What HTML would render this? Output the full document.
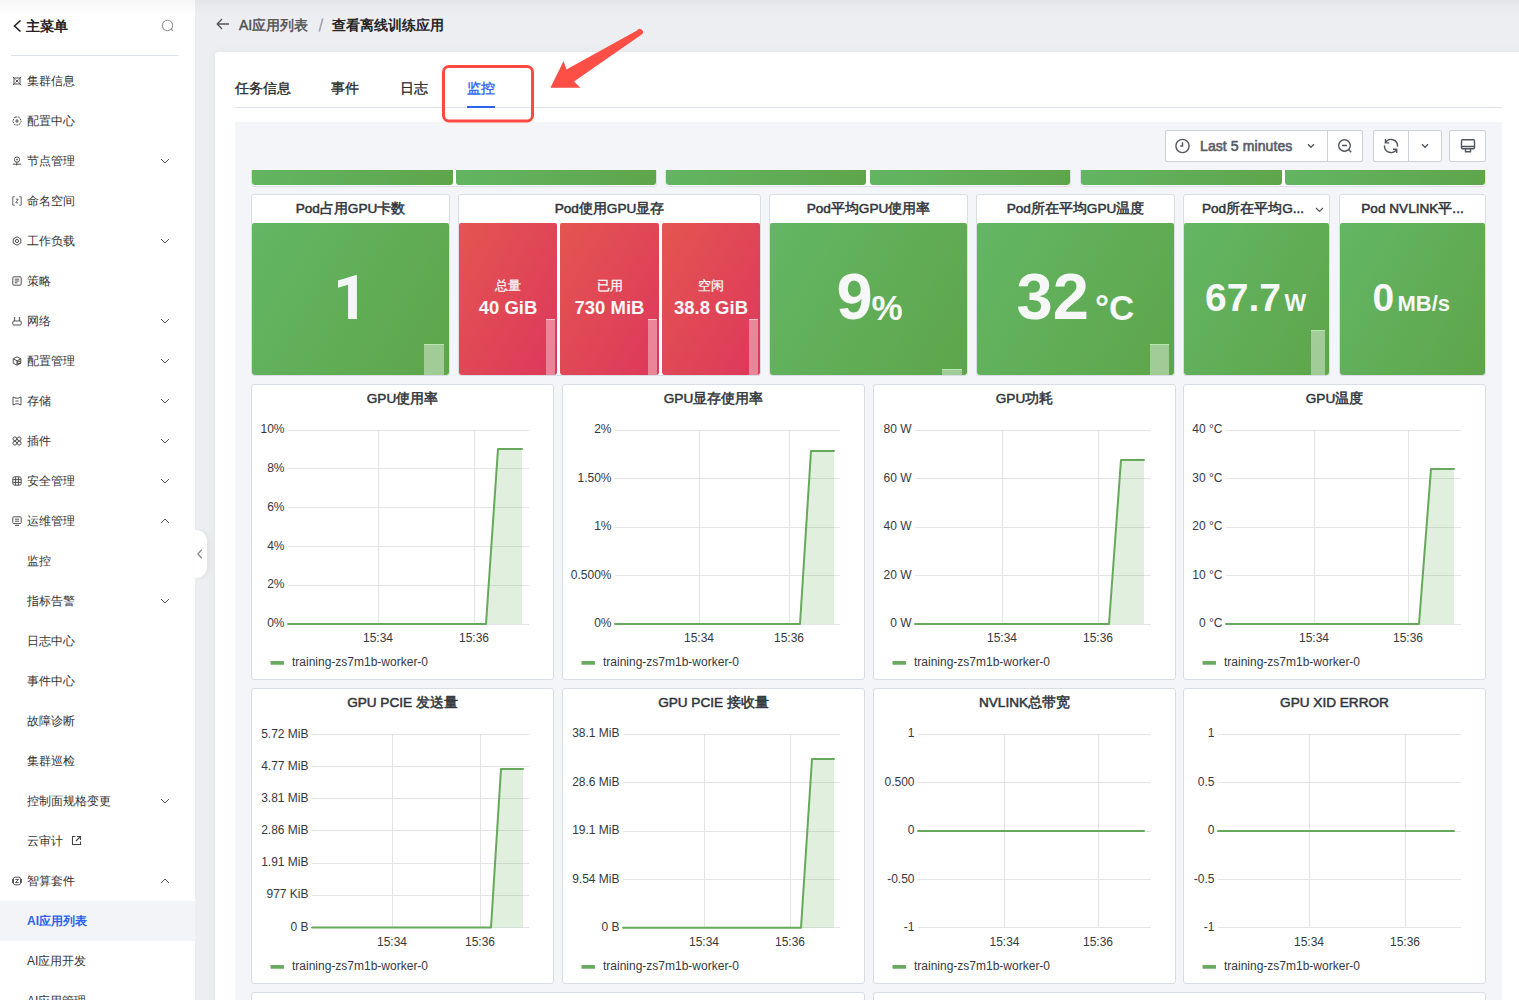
<!DOCTYPE html><html><head><meta charset="utf-8"><style>
*{box-sizing:border-box;margin:0;padding:0}
html,body{width:1519px;height:1000px;overflow:hidden}
body{position:relative;background:#edeef2;font-family:"Liberation Sans", sans-serif;color:#333}
.abs{position:absolute}
.t{position:absolute;white-space:nowrap;line-height:1}
</style></head><body>
<div class="abs" style="left:0;top:0;width:195px;height:1000px;background:#fff"></div><div class="abs" style="left:0;top:0;width:1519px;height:16px;background:linear-gradient(rgba(0,0,0,0.035),rgba(0,0,0,0));z-index:5"></div><svg class="abs" style="left:12px;top:18px" width="12" height="16" viewBox="0 0 12 16"><path d="M8.5 2.5 L2.5 8 L8.5 13.5" fill="none" stroke="#222" stroke-width="1.6"/></svg><div class="t" style="left:26px;top:19px;font-size:14px;font-weight:bold;color:#222;line-height:14px">主菜单</div><svg class="abs" style="left:161px;top:19px" width="14" height="14" viewBox="0 0 14 14"><circle cx="6.5" cy="6.5" r="5.2" fill="none" stroke="#999" stroke-width="1.1"/><path d="M10.2 10.2 L12 12" stroke="#999" stroke-width="1.1"/></svg><div class="abs" style="left:11px;top:55px;width:168px;height:1px;background:#dde2ea"></div><svg class="abs" style="left:12px;top:75.5px" width="10" height="10" viewBox="0 0 10 10"><rect x="2" y="2" width="6" height="6" stroke="#4a4a4a" stroke-width="0.95" fill="none"/><path d="M0.8 0.8 L2.4 2.4 M9.2 0.8 L7.6 2.4 M0.8 9.2 L2.4 7.6 M9.2 9.2 L7.6 7.6 M3.5 3.5 L6.5 6.5 M6.5 3.5 L3.5 6.5" stroke="#4a4a4a" stroke-width="0.95" fill="none"/></svg><div class="t" style="left:27px;top:75px;font-size:12px;line-height:12px;color:#333;font-weight:normal">集群信息</div><svg class="abs" style="left:12px;top:115.5px" width="10" height="10" viewBox="0 0 10 10"><path d="M3 1 L7 1 L9.4 5 L7 9 L3 9 L0.6 5 Z" stroke="#4a4a4a" stroke-width="0.95" fill="none" stroke-dasharray="2 0.8"/><path d="M5 3 L5 7 M3.2 5 L6.8 5" stroke="#4a4a4a" stroke-width="0.95" fill="none"/></svg><div class="t" style="left:27px;top:115px;font-size:12px;line-height:12px;color:#333;font-weight:normal">配置中心</div><svg class="abs" style="left:12px;top:155.5px" width="10" height="10" viewBox="0 0 10 10"><circle cx="5" cy="3.6" r="2.6" stroke="#4a4a4a" stroke-width="0.95" fill="none"/><circle cx="5" cy="3.6" r="0.8" fill="#3a3a3a"/><path d="M5 6.2 L4.6 9.5 M0.8 8.2 L9.2 8.2" stroke="#4a4a4a" stroke-width="0.95" fill="none"/></svg><div class="t" style="left:27px;top:155px;font-size:12px;line-height:12px;color:#333;font-weight:normal">节点管理</div><svg class="abs" style="left:160px;top:158px" width="10" height="6" viewBox="0 0 10 6"><path d="M1 1 L5 5 L9 1" fill="none" stroke="#555" stroke-width="1"/></svg><svg class="abs" style="left:12px;top:195.5px" width="10" height="10" viewBox="0 0 10 10"><path d="M2.8 0.8 L0.8 0.8 L0.8 9.2 L2.8 9.2 M7.2 0.8 L9.2 0.8 L9.2 9.2 L7.2 9.2 M3.8 3.2 L6.2 3.2 L3.8 6.8 L6.2 6.8" stroke="#666" stroke-width="1" fill="none"/></svg><div class="t" style="left:27px;top:195px;font-size:12px;line-height:12px;color:#333;font-weight:normal">命名空间</div><svg class="abs" style="left:12px;top:235.5px" width="10" height="10" viewBox="0 0 10 10"><path d="M5 0.8 L8.8 3 L8.8 7 L5 9.2 L1.2 7 L1.2 3 Z" stroke="#4a4a4a" stroke-width="0.95" fill="none"/><circle cx="5" cy="5" r="1.6" stroke="#4a4a4a" stroke-width="0.95" fill="none"/></svg><div class="t" style="left:27px;top:235px;font-size:12px;line-height:12px;color:#333;font-weight:normal">工作负载</div><svg class="abs" style="left:160px;top:238px" width="10" height="6" viewBox="0 0 10 6"><path d="M1 1 L5 5 L9 1" fill="none" stroke="#555" stroke-width="1"/></svg><svg class="abs" style="left:12px;top:275.5px" width="10" height="10" viewBox="0 0 10 10"><rect x="0.8" y="0.8" width="8.4" height="8.4" rx="1.2" stroke="#4a4a4a" stroke-width="0.95" fill="none"/><path d="M2.8 3.2 L7.2 3.2 M2.8 5 L7.2 5 M2.8 6.8 L5.5 6.8" stroke="#4a4a4a" stroke-width="0.95" fill="none"/></svg><div class="t" style="left:27px;top:275px;font-size:12px;line-height:12px;color:#333;font-weight:normal">策略</div><svg class="abs" style="left:12px;top:315.5px" width="10" height="10" viewBox="0 0 10 10"><rect x="0.8" y="5" width="8.4" height="4" rx="1" stroke="#4a4a4a" stroke-width="0.95" fill="none"/><path d="M2.6 5 L2.6 1 M7.4 5 L7.4 1" stroke="#4a4a4a" stroke-width="0.95" fill="none"/></svg><div class="t" style="left:27px;top:315px;font-size:12px;line-height:12px;color:#333;font-weight:normal">网络</div><svg class="abs" style="left:160px;top:318px" width="10" height="6" viewBox="0 0 10 6"><path d="M1 1 L5 5 L9 1" fill="none" stroke="#555" stroke-width="1"/></svg><svg class="abs" style="left:12px;top:355.5px" width="10" height="10" viewBox="0 0 10 10"><path d="M5 0.8 L8.8 2.8 L8.8 7.2 L5 9.2 L1.2 7.2 L1.2 2.8 Z M1.2 2.8 L5 4.8 L8.8 2.8 M5 4.8 L5 9.2" stroke="#4a4a4a" stroke-width="0.95" fill="none"/><rect x="5.8" y="5.2" width="2.4" height="2.4" stroke="#4a4a4a" stroke-width="0.95" fill="none"/></svg><div class="t" style="left:27px;top:355px;font-size:12px;line-height:12px;color:#333;font-weight:normal">配置管理</div><svg class="abs" style="left:160px;top:358px" width="10" height="6" viewBox="0 0 10 6"><path d="M1 1 L5 5 L9 1" fill="none" stroke="#555" stroke-width="1"/></svg><svg class="abs" style="left:12px;top:395.5px" width="10" height="10" viewBox="0 0 10 10"><path d="M1 1 L4 2.2 L6 2.2 L9 1 L9 9 L6 7.8 L4 7.8 L1 9 Z" stroke="#4a4a4a" stroke-width="0.95" fill="none"/><path d="M3.5 5 L6.5 5" stroke="#4a4a4a" stroke-width="0.95" fill="none"/></svg><div class="t" style="left:27px;top:395px;font-size:12px;line-height:12px;color:#333;font-weight:normal">存储</div><svg class="abs" style="left:160px;top:398px" width="10" height="6" viewBox="0 0 10 6"><path d="M1 1 L5 5 L9 1" fill="none" stroke="#555" stroke-width="1"/></svg><svg class="abs" style="left:12px;top:435.5px" width="10" height="10" viewBox="0 0 10 10"><circle cx="2.8" cy="2.8" r="1.9" stroke="#4a4a4a" stroke-width="0.95" fill="none"/><circle cx="7.2" cy="2.8" r="1.9" stroke="#4a4a4a" stroke-width="0.95" fill="none"/><circle cx="2.8" cy="7.2" r="1.9" stroke="#4a4a4a" stroke-width="0.95" fill="none"/><circle cx="7.2" cy="7.2" r="1.9" stroke="#4a4a4a" stroke-width="0.95" fill="none"/></svg><div class="t" style="left:27px;top:435px;font-size:12px;line-height:12px;color:#333;font-weight:normal">插件</div><svg class="abs" style="left:160px;top:438px" width="10" height="6" viewBox="0 0 10 6"><path d="M1 1 L5 5 L9 1" fill="none" stroke="#555" stroke-width="1"/></svg><svg class="abs" style="left:12px;top:475.5px" width="10" height="10" viewBox="0 0 10 10"><rect x="0.8" y="0.8" width="8.4" height="8.4" rx="2" stroke="#4a4a4a" stroke-width="0.95" fill="none"/><path d="M0.8 3.6 L9.2 3.6 M0.8 6.4 L9.2 6.4 M3.6 0.8 L3.6 9.2 M6.4 0.8 L6.4 9.2" stroke="#4a4a4a" stroke-width="0.95" fill="none"/></svg><div class="t" style="left:27px;top:475px;font-size:12px;line-height:12px;color:#333;font-weight:normal">安全管理</div><svg class="abs" style="left:160px;top:478px" width="10" height="6" viewBox="0 0 10 6"><path d="M1 1 L5 5 L9 1" fill="none" stroke="#555" stroke-width="1"/></svg><svg class="abs" style="left:12px;top:515.5px" width="10" height="10" viewBox="0 0 10 10"><rect x="0.8" y="0.8" width="8.4" height="6.8" rx="1" stroke="#4a4a4a" stroke-width="0.95" fill="none"/><path d="M3 3.2 L7 3.2 M3 5.2 L7 5.2 M3 9.4 L7 9.4" stroke="#4a4a4a" stroke-width="0.95" fill="none"/></svg><div class="t" style="left:27px;top:515px;font-size:12px;line-height:12px;color:#333;font-weight:normal">运维管理</div><svg class="abs" style="left:160px;top:518px" width="10" height="6" viewBox="0 0 10 6"><path d="M1 5 L5 1 L9 5" fill="none" stroke="#555" stroke-width="1"/></svg><div class="t" style="left:27px;top:555px;font-size:12px;line-height:12px;color:#333;font-weight:normal">监控</div><div class="t" style="left:27px;top:595px;font-size:12px;line-height:12px;color:#333;font-weight:normal">指标告警</div><svg class="abs" style="left:160px;top:598px" width="10" height="6" viewBox="0 0 10 6"><path d="M1 1 L5 5 L9 1" fill="none" stroke="#555" stroke-width="1"/></svg><div class="t" style="left:27px;top:635px;font-size:12px;line-height:12px;color:#333;font-weight:normal">日志中心</div><div class="t" style="left:27px;top:675px;font-size:12px;line-height:12px;color:#333;font-weight:normal">事件中心</div><div class="t" style="left:27px;top:715px;font-size:12px;line-height:12px;color:#333;font-weight:normal">故障诊断</div><div class="t" style="left:27px;top:755px;font-size:12px;line-height:12px;color:#333;font-weight:normal">集群巡检</div><div class="t" style="left:27px;top:795px;font-size:12px;line-height:12px;color:#333;font-weight:normal">控制面规格变更</div><svg class="abs" style="left:160px;top:798px" width="10" height="6" viewBox="0 0 10 6"><path d="M1 1 L5 5 L9 1" fill="none" stroke="#555" stroke-width="1"/></svg><div class="t" style="left:27px;top:835px;font-size:12px;line-height:12px;color:#333;font-weight:normal">云审计</div><svg class="abs" style="left:71px;top:835px" width="11" height="11" viewBox="0 0 11 11"><path d="M4.5 1.5 L1.5 1.5 L1.5 9.5 L9.5 9.5 L9.5 6.5 M6 1.5 L9.5 1.5 L9.5 5 M9.5 1.5 L5 6" fill="none" stroke="#444" stroke-width="1.1"/></svg><svg class="abs" style="left:12px;top:875.5px" width="10" height="10" viewBox="0 0 10 10"><rect x="1.5" y="1.2" width="7" height="7.6" rx="1.6" stroke="#4a4a4a" stroke-width="0.95" fill="none"/><path d="M0.6 3 L0.6 7 M9.4 3 L9.4 7 M3.4 3.4 L6.6 3.4 L3.4 6.6 L6.6 6.6" stroke="#4a4a4a" stroke-width="0.95" fill="none"/></svg><div class="t" style="left:27px;top:875px;font-size:12px;line-height:12px;color:#333;font-weight:normal">智算套件</div><svg class="abs" style="left:160px;top:878px" width="10" height="6" viewBox="0 0 10 6"><path d="M1 5 L5 1 L9 5" fill="none" stroke="#555" stroke-width="1"/></svg><div class="abs" style="left:0;top:901px;width:195px;height:40px;background:#f3f4f8"></div><div class="t" style="left:27px;top:915px;font-size:12px;line-height:12px;color:#2b63f0;font-weight:bold">AI应用列表</div><div class="t" style="left:27px;top:955px;font-size:12px;line-height:12px;color:#333;font-weight:normal">AI应用开发</div><div class="t" style="left:27px;top:995px;font-size:12px;line-height:12px;color:#333;font-weight:normal">AI应用管理</div><div class="abs" style="left:195px;top:530px;width:12px;height:48px;background:#fff;border-radius:0 11px 11px 0;box-shadow:2px 0 5px rgba(0,0,0,0.06)"></div><svg class="abs" style="left:197px;top:549px" width="6" height="10" viewBox="0 0 6 10"><path d="M4.8 0.8 L0.9 5 L4.8 9.2" fill="none" stroke="#8a8a8a" stroke-width="1.25"/></svg><svg class="abs" style="left:216px;top:18px" width="14" height="12" viewBox="0 0 14 12"><path d="M6 1 L1.2 6 L6 11 M1.2 6 L13 6" fill="none" stroke="#555" stroke-width="1.3"/></svg><div class="t" style="left:239px;top:18px;font-size:14px;line-height:14px;-webkit-text-stroke:0.45px #505050;color:#505050">AI应用列表</div><svg class="abs" style="left:0;top:0" width="400" height="40"><path d="M322.6 19 L319.4 31" stroke="#a3a8b2" stroke-width="1.7" stroke-linecap="round"/></svg><div class="t" style="left:332px;top:18px;font-size:14px;line-height:14px;font-weight:bold;color:#262626">查看离线训练应用</div><div class="abs" style="left:215px;top:52px;width:1310px;height:960px;background:#fff;border-radius:4px;box-shadow:0 0 8px rgba(0,0,0,0.05)"></div><div class="t" style="left:235px;top:81px;font-size:14px;line-height:14px;-webkit-text-stroke:0.35px #2a2a2a;color:#2a2a2a">任务信息</div><div class="t" style="left:331px;top:81px;font-size:14px;line-height:14px;-webkit-text-stroke:0.35px #2a2a2a;color:#2a2a2a">事件</div><div class="t" style="left:400px;top:81px;font-size:14px;line-height:14px;-webkit-text-stroke:0.35px #2a2a2a;color:#2a2a2a">日志</div><div class="t" style="left:467px;top:81px;font-size:14px;line-height:14px;-webkit-text-stroke:0.35px #2b63f0;color:#2b63f0">监控</div><div class="abs" style="left:235px;top:107px;width:1267px;height:1px;background:#dfe3ea"></div><div class="abs" style="left:467px;top:106px;width:28px;height:2px;background:#2b63f0"></div><div class="abs" style="left:235px;top:122px;width:1267px;height:880px;background:#f4f5f8;overflow:hidden" id="dash"><div class="abs" style="left:930px;top:8px;width:198px;height:32px;background:#fff;border:1px solid #ccd1da;border-radius:2px"></div><div class="abs" style="left:1092px;top:9px;width:1px;height:30px;background:#ccd1da"></div><div class="abs" style="left:1138px;top:8px;width:69px;height:32px;background:#fff;border:1px solid #ccd1da;border-radius:2px"></div><div class="abs" style="left:1173px;top:9px;width:1px;height:30px;background:#ccd1da"></div><div class="abs" style="left:1214px;top:8px;width:37px;height:32px;background:#fff;border:1px solid #ccd1da;border-radius:2px"></div><svg class="abs" style="left:940px;top:16px;overflow:visible" width="16" height="16" viewBox="0 0 16 16"><circle cx="7.5" cy="8" r="6.6" fill="none" stroke="#50565f" stroke-width="1.4"/><path d="M7.5 4.3 L7.5 8 L5.4 8" fill="none" stroke="#50565f" stroke-width="1.4"/></svg><div class="t" style="left:965px;top:17px;font-size:14px;line-height:14px;-webkit-text-stroke:0.6px #595e67;color:#595e67;letter-spacing:0.1px">Last 5 minutes</div><svg class="abs" style="left:1072px;top:21px;overflow:visible" width="8" height="6" viewBox="0 0 8 6"><path d="M1 1.2 L4 4.2 L7 1.2" fill="none" stroke="#50565f" stroke-width="1.4"/></svg><svg class="abs" style="left:1101.7px;top:15.800000000000011px;overflow:visible" width="16" height="16" viewBox="0 0 16 16"><circle cx="7.5" cy="7.5" r="5.8" fill="none" stroke="#50565f" stroke-width="1.4"/><path d="M5 7.5 L10 7.5 M11.6 11.6 L14.2 14.2" fill="none" stroke="#50565f" stroke-width="1.4"/></svg><svg class="abs" style="left:1147px;top:16px;overflow:visible" width="18" height="17" viewBox="0 0 18 17"><path d="M3.37 4.75 A6.5 6.5 0 0 1 15.48 8.57 M2.52 7.43 A6.5 6.5 0 0 0 14.63 11.25" fill="none" stroke="#50565f" stroke-width="1.4"/><path d="M3.5 0.9 L3.37 4.75 L7.2 4.9 M10.9 11.2 L14.63 11.25 L14.7 15.1" fill="none" stroke="#50565f" stroke-width="1.4"/></svg><svg class="abs" style="left:1186px;top:21px;overflow:visible" width="8" height="6" viewBox="0 0 8 6"><path d="M1 1.2 L4 4.2 L7 1.2" fill="none" stroke="#50565f" stroke-width="1.4"/></svg><svg class="abs" style="left:1225px;top:16px;overflow:visible" width="16" height="16" viewBox="0 0 16 16"><rect x="1.5" y="1.8" width="13" height="9" rx="1.2" fill="none" stroke="#50565f" stroke-width="1.4"/><path d="M1.5 8.5 L14.5 8.5 M5.5 11 L5.5 13.8 L10.5 13.8 L10.5 11" fill="none" stroke="#50565f" stroke-width="1.4"/></svg><div class="abs" style="left:0;top:48px;width:1267px;height:830px;overflow:hidden"><div class="abs" style="left:16px;top:-20px;width:406px;height:37px;background:#fff;border:1px solid #dde1e7;border-radius:3px"></div><div class="abs" style="left:430px;top:-20px;width:406px;height:37px;background:#fff;border:1px solid #dde1e7;border-radius:3px"></div><div class="abs" style="left:845px;top:-20px;width:406px;height:37px;background:#fff;border:1px solid #dde1e7;border-radius:3px"></div><div class="abs" style="left:17px;top:-20px;width:201px;height:35px;background:linear-gradient(120deg,#63b664,#5ea54a);border-radius:0 0 3px 3px"></div><div class="abs" style="left:221px;top:-20px;width:200px;height:35px;background:linear-gradient(120deg,#63b664,#5ea54a);border-radius:0 0 3px 3px"></div><div class="abs" style="left:431px;top:-20px;width:200px;height:35px;background:linear-gradient(120deg,#63b664,#5ea54a);border-radius:0 0 3px 3px"></div><div class="abs" style="left:635px;top:-20px;width:200px;height:35px;background:linear-gradient(120deg,#63b664,#5ea54a);border-radius:0 0 3px 3px"></div><div class="abs" style="left:846px;top:-20px;width:201px;height:35px;background:linear-gradient(120deg,#63b664,#5ea54a);border-radius:0 0 3px 3px"></div><div class="abs" style="left:1050px;top:-20px;width:200px;height:35px;background:linear-gradient(120deg,#63b664,#5ea54a);border-radius:0 0 3px 3px"></div></div><div class="abs" style="left:16px;top:72px;width:199px;height:182px;background:#fff;border:1px solid #d9dde4;border-radius:3px"></div><div class="t" style="left:-34.5px;width:300px;text-align:center;top:80.20px;font-size:13.6px;line-height:13.6px;-webkit-text-stroke:0.5px #30353b;color:#30353b">Pod占用GPU卡数</div><div class="abs" style="left:223px;top:72px;width:303px;height:182px;background:#fff;border:1px solid #d9dde4;border-radius:3px"></div><div class="t" style="left:224.5px;width:300px;text-align:center;top:80.20px;font-size:13.6px;line-height:13.6px;-webkit-text-stroke:0.5px #30353b;color:#30353b">Pod使用GPU显存</div><div class="abs" style="left:534px;top:72px;width:199px;height:182px;background:#fff;border:1px solid #d9dde4;border-radius:3px"></div><div class="t" style="left:483.5px;width:300px;text-align:center;top:80.20px;font-size:13.6px;line-height:13.6px;-webkit-text-stroke:0.5px #30353b;color:#30353b">Pod平均GPU使用率</div><div class="abs" style="left:741px;top:72px;width:199px;height:182px;background:#fff;border:1px solid #d9dde4;border-radius:3px"></div><div class="t" style="left:690.5px;width:300px;text-align:center;top:80.20px;font-size:13.6px;line-height:13.6px;-webkit-text-stroke:0.5px #30353b;color:#30353b">Pod所在平均GPU温度</div><div class="abs" style="left:948px;top:72px;width:147px;height:182px;background:#fff;border:1px solid #d9dde4;border-radius:3px"></div><div class="t" style="left:868px;width:300px;text-align:center;top:80.20px;font-size:13.6px;line-height:13.6px;-webkit-text-stroke:0.5px #30353b;color:#30353b">Pod所在平均G...</div><div class="abs" style="left:1104px;top:72px;width:147px;height:182px;background:#fff;border:1px solid #d9dde4;border-radius:3px"></div><div class="t" style="left:1027.5px;width:300px;text-align:center;top:80.20px;font-size:13.6px;line-height:13.6px;-webkit-text-stroke:0.5px #30353b;color:#30353b">Pod NVLINK平...</div><svg class="abs" style="left:1080px;top:85px;overflow:visible" width="9" height="6" viewBox="0 0 9 6"><path d="M1 1 L4.5 4.5 L8 1" fill="none" stroke="#555" stroke-width="1.2"/></svg><div class="abs" style="left:17px;top:101px;width:197px;height:152px;background:linear-gradient(120deg,#63b664,#5ea54a);border-radius:2px 2px 3px 3px"></div><div class="abs" style="left:189px;top:222px;width:20px;height:31px;background:rgba(255,255,255,0.42);border-top:1.5px solid rgba(200,255,190,0.55)"></div><div class="abs" style="left:224px;top:101px;width:98px;height:152px;background:linear-gradient(120deg,#e45550,#dd385c);border-radius:2px 2px 3px 3px"></div><div class="abs" style="left:311px;top:197px;width:9px;height:56px;background:rgba(255,255,255,0.38);border-top:1.5px solid rgba(255,255,255,0.5)"></div><div class="abs" style="left:325px;top:101px;width:99px;height:152px;background:linear-gradient(120deg,#e45550,#dd385c);border-radius:2px 2px 3px 3px"></div><div class="abs" style="left:413px;top:197px;width:9px;height:56px;background:rgba(255,255,255,0.38);border-top:1.5px solid rgba(255,255,255,0.5)"></div><div class="abs" style="left:427px;top:101px;width:98px;height:152px;background:linear-gradient(120deg,#e45550,#dd385c);border-radius:2px 2px 3px 3px"></div><div class="abs" style="left:514px;top:197px;width:9px;height:56px;background:rgba(255,255,255,0.38);border-top:1.5px solid rgba(255,255,255,0.5)"></div><div class="abs" style="left:535px;top:101px;width:197px;height:152px;background:linear-gradient(120deg,#63b664,#5ea54a);border-radius:2px 2px 3px 3px"></div><div class="abs" style="left:707px;top:247px;width:20px;height:6px;background:rgba(255,255,255,0.42);border-top:1.5px solid rgba(200,255,190,0.55)"></div><div class="abs" style="left:742px;top:101px;width:197px;height:152px;background:linear-gradient(120deg,#63b664,#5ea54a);border-radius:2px 2px 3px 3px"></div><div class="abs" style="left:915px;top:222px;width:19px;height:31px;background:rgba(255,255,255,0.42);border-top:1.5px solid rgba(200,255,190,0.55)"></div><div class="abs" style="left:949px;top:101px;width:145px;height:152px;background:linear-gradient(120deg,#63b664,#5ea54a);border-radius:2px 2px 3px 3px"></div><div class="abs" style="left:1076px;top:208px;width:14px;height:45px;background:rgba(255,255,255,0.42);border-top:1.5px solid rgba(200,255,190,0.55)"></div><div class="abs" style="left:1105px;top:101px;width:145px;height:152px;background:linear-gradient(120deg,#63b664,#5ea54a);border-radius:2px 2px 3px 3px"></div><svg class="abs" style="left:95px;top:148px;overflow:visible" width="40" height="55" viewBox="0 0 40 55"><polygon points="8,10.6 26.9,4.75 26.9,49 18.1,49 18.1,14.8 8,17.8" fill="#f4f5f7"/></svg><div class="t" style="left:601.50px;top:142.48px;font-size:65px;line-height:65px;font-weight:bold;color:#f6f7f7;">9</div><div class="t" style="left:636.50px;top:167.87px;font-size:35px;line-height:35px;font-weight:bold;color:#f6f7f7;">%</div><div class="t" style="left:781.50px;top:142.48px;font-size:65px;line-height:65px;font-weight:bold;color:#f6f7f7;">32</div><div class="t" style="left:860.00px;top:167.87px;font-size:35px;line-height:35px;font-weight:bold;color:#f6f7f7;">°C</div><div class="t" style="left:970.00px;top:156.49px;font-size:39px;line-height:39px;font-weight:bold;color:#f6f7f7;">67.7</div><div class="t" style="left:1049.50px;top:170.03px;font-size:23px;line-height:23px;font-weight:bold;color:#f6f7f7;">W</div><div class="t" style="left:1137.50px;top:156.49px;font-size:39px;line-height:39px;font-weight:bold;color:#f6f7f7;">0</div><div class="t" style="left:1162.50px;top:170.88px;font-size:22px;line-height:22px;font-weight:bold;color:#f6f7f7;">MB/s</div><div class="t" style="left:224px;width:98px;text-align:center;top:157px;font-size:13px;line-height:14px;-webkit-text-stroke:0.3px #f6f7f7;color:#f6f7f7">总量</div><div class="t" style="left:224px;width:98px;text-align:center;top:175.5px;font-size:18.5px;line-height:19px;font-weight:bold;color:#f6f7f7">40 GiB</div><div class="t" style="left:325px;width:99px;text-align:center;top:157px;font-size:13px;line-height:14px;-webkit-text-stroke:0.3px #f6f7f7;color:#f6f7f7">已用</div><div class="t" style="left:325px;width:99px;text-align:center;top:175.5px;font-size:18.5px;line-height:19px;font-weight:bold;color:#f6f7f7">730 MiB</div><div class="t" style="left:427px;width:98px;text-align:center;top:157px;font-size:13px;line-height:14px;-webkit-text-stroke:0.3px #f6f7f7;color:#f6f7f7">空闲</div><div class="t" style="left:427px;width:98px;text-align:center;top:175.5px;font-size:18.5px;line-height:19px;font-weight:bold;color:#f6f7f7">38.8 GiB</div><div class="abs" style="left:16px;top:262px;width:303px;height:296px;background:#fff;border:1px solid #d9dde4;border-radius:3px"></div><div class="t" style="left:17.5px;width:300px;text-align:center;top:270.30px;font-size:13.6px;line-height:13.6px;-webkit-text-stroke:0.5px #30353b;color:#30353b">GPU使用率</div><div class="abs" style="left:327px;top:262px;width:303px;height:296px;background:#fff;border:1px solid #d9dde4;border-radius:3px"></div><div class="t" style="left:328.5px;width:300px;text-align:center;top:270.30px;font-size:13.6px;line-height:13.6px;-webkit-text-stroke:0.5px #30353b;color:#30353b">GPU显存使用率</div><div class="abs" style="left:638px;top:262px;width:303px;height:296px;background:#fff;border:1px solid #d9dde4;border-radius:3px"></div><div class="t" style="left:639.5px;width:300px;text-align:center;top:270.30px;font-size:13.6px;line-height:13.6px;-webkit-text-stroke:0.5px #30353b;color:#30353b">GPU功耗</div><div class="abs" style="left:948px;top:262px;width:303px;height:296px;background:#fff;border:1px solid #d9dde4;border-radius:3px"></div><div class="t" style="left:949.5px;width:300px;text-align:center;top:270.30px;font-size:13.6px;line-height:13.6px;-webkit-text-stroke:0.5px #30353b;color:#30353b">GPU温度</div><div class="abs" style="left:16px;top:566px;width:303px;height:296px;background:#fff;border:1px solid #d9dde4;border-radius:3px"></div><div class="t" style="left:17.5px;width:300px;text-align:center;top:574.30px;font-size:13.6px;line-height:13.6px;-webkit-text-stroke:0.5px #30353b;color:#30353b">GPU PCIE 发送量</div><div class="abs" style="left:327px;top:566px;width:303px;height:296px;background:#fff;border:1px solid #d9dde4;border-radius:3px"></div><div class="t" style="left:328.5px;width:300px;text-align:center;top:574.30px;font-size:13.6px;line-height:13.6px;-webkit-text-stroke:0.5px #30353b;color:#30353b">GPU PCIE 接收量</div><div class="abs" style="left:638px;top:566px;width:303px;height:296px;background:#fff;border:1px solid #d9dde4;border-radius:3px"></div><div class="t" style="left:639.5px;width:300px;text-align:center;top:574.30px;font-size:13.6px;line-height:13.6px;-webkit-text-stroke:0.5px #30353b;color:#30353b">NVLINK总带宽</div><div class="abs" style="left:948px;top:566px;width:303px;height:296px;background:#fff;border:1px solid #d9dde4;border-radius:3px"></div><div class="t" style="left:949.5px;width:300px;text-align:center;top:574.30px;font-size:13.6px;line-height:13.6px;-webkit-text-stroke:0.5px #30353b;color:#30353b">GPU XID ERROR</div><svg class="abs" style="left:-235px;top:-122px" width="1519" height="1000" viewBox="0 0 1519 1000" font-family='"Liberation Sans", sans-serif'><line x1="288" x2="529" y1="430.5" y2="430.5" stroke="#e3e4e6" stroke-width="1"/><text x="284.5" y="433.2" text-anchor="end" font-size="12" fill="#35393f">10%</text><line x1="288" x2="529" y1="468.5" y2="468.5" stroke="#e3e4e6" stroke-width="1"/><text x="284.5" y="472.0" text-anchor="end" font-size="12" fill="#35393f">8%</text><line x1="288" x2="529" y1="507.5" y2="507.5" stroke="#e3e4e6" stroke-width="1"/><text x="284.5" y="510.8" text-anchor="end" font-size="12" fill="#35393f">6%</text><line x1="288" x2="529" y1="546.5" y2="546.5" stroke="#e3e4e6" stroke-width="1"/><text x="284.5" y="549.6" text-anchor="end" font-size="12" fill="#35393f">4%</text><line x1="288" x2="529" y1="585.5" y2="585.5" stroke="#e3e4e6" stroke-width="1"/><text x="284.5" y="588.4000000000001" text-anchor="end" font-size="12" fill="#35393f">2%</text><line x1="288" x2="529" y1="624.5" y2="624.5" stroke="#e3e4e6" stroke-width="1"/><text x="284.5" y="627.2" text-anchor="end" font-size="12" fill="#35393f">0%</text><line x1="378.5" x2="378.5" y1="430" y2="624" stroke="#e3e4e6" stroke-width="1"/><text x="378" y="642.3" text-anchor="middle" font-size="12" fill="#35393f">15:34</text><line x1="474.5" x2="474.5" y1="430" y2="624" stroke="#e3e4e6" stroke-width="1"/><text x="474" y="642.3" text-anchor="middle" font-size="12" fill="#35393f">15:36</text><polygon points="486,624 498,449 522,449 522,624" fill="rgba(86,166,75,0.18)"/><polyline points="288,624 486,624 498,449 522,449" fill="none" stroke="#66a95b" stroke-width="2" stroke-linejoin="round" stroke-linecap="round"/><rect x="270.5" y="661.0" width="13.5" height="3.8" rx="0.6" fill="#6aaa5f"/><text x="292" y="665.9" font-size="12" fill="#35393f">training-zs7m1b-worker-0</text><line x1="615" x2="840" y1="430.5" y2="430.5" stroke="#e3e4e6" stroke-width="1"/><text x="611.5" y="433.2" text-anchor="end" font-size="12" fill="#35393f">2%</text><line x1="615" x2="840" y1="478.5" y2="478.5" stroke="#e3e4e6" stroke-width="1"/><text x="611.5" y="481.7" text-anchor="end" font-size="12" fill="#35393f">1.50%</text><line x1="615" x2="840" y1="527.5" y2="527.5" stroke="#e3e4e6" stroke-width="1"/><text x="611.5" y="530.2" text-anchor="end" font-size="12" fill="#35393f">1%</text><line x1="615" x2="840" y1="575.5" y2="575.5" stroke="#e3e4e6" stroke-width="1"/><text x="611.5" y="578.7" text-anchor="end" font-size="12" fill="#35393f">0.500%</text><line x1="615" x2="840" y1="624.5" y2="624.5" stroke="#e3e4e6" stroke-width="1"/><text x="611.5" y="627.2" text-anchor="end" font-size="12" fill="#35393f">0%</text><line x1="699.5" x2="699.5" y1="430" y2="624" stroke="#e3e4e6" stroke-width="1"/><text x="699" y="642.3" text-anchor="middle" font-size="12" fill="#35393f">15:34</text><line x1="789.5" x2="789.5" y1="430" y2="624" stroke="#e3e4e6" stroke-width="1"/><text x="789" y="642.3" text-anchor="middle" font-size="12" fill="#35393f">15:36</text><polygon points="800,624 811,451 834,451 834,624" fill="rgba(86,166,75,0.18)"/><polyline points="615,624 800,624 811,451 834,451" fill="none" stroke="#66a95b" stroke-width="2" stroke-linejoin="round" stroke-linecap="round"/><rect x="581.5" y="661.0" width="13.5" height="3.8" rx="0.6" fill="#6aaa5f"/><text x="603" y="665.9" font-size="12" fill="#35393f">training-zs7m1b-worker-0</text><line x1="915" x2="1151" y1="430.5" y2="430.5" stroke="#e3e4e6" stroke-width="1"/><text x="911.5" y="433.2" text-anchor="end" font-size="12" fill="#35393f">80 W</text><line x1="915" x2="1151" y1="478.5" y2="478.5" stroke="#e3e4e6" stroke-width="1"/><text x="911.5" y="481.7" text-anchor="end" font-size="12" fill="#35393f">60 W</text><line x1="915" x2="1151" y1="527.5" y2="527.5" stroke="#e3e4e6" stroke-width="1"/><text x="911.5" y="530.2" text-anchor="end" font-size="12" fill="#35393f">40 W</text><line x1="915" x2="1151" y1="575.5" y2="575.5" stroke="#e3e4e6" stroke-width="1"/><text x="911.5" y="578.7" text-anchor="end" font-size="12" fill="#35393f">20 W</text><line x1="915" x2="1151" y1="624.5" y2="624.5" stroke="#e3e4e6" stroke-width="1"/><text x="911.5" y="627.2" text-anchor="end" font-size="12" fill="#35393f">0 W</text><line x1="1002.5" x2="1002.5" y1="430" y2="624" stroke="#e3e4e6" stroke-width="1"/><text x="1002" y="642.3" text-anchor="middle" font-size="12" fill="#35393f">15:34</text><line x1="1098.5" x2="1098.5" y1="430" y2="624" stroke="#e3e4e6" stroke-width="1"/><text x="1098" y="642.3" text-anchor="middle" font-size="12" fill="#35393f">15:36</text><polygon points="1109,624 1121,460 1144,460 1144,624" fill="rgba(86,166,75,0.18)"/><polyline points="915,624 1109,624 1121,460 1144,460" fill="none" stroke="#66a95b" stroke-width="2" stroke-linejoin="round" stroke-linecap="round"/><rect x="892.5" y="661.0" width="13.5" height="3.8" rx="0.6" fill="#6aaa5f"/><text x="914" y="665.9" font-size="12" fill="#35393f">training-zs7m1b-worker-0</text><line x1="1226" x2="1461" y1="430.5" y2="430.5" stroke="#e3e4e6" stroke-width="1"/><text x="1222.5" y="433.2" text-anchor="end" font-size="12" fill="#35393f">40 °C</text><line x1="1226" x2="1461" y1="478.5" y2="478.5" stroke="#e3e4e6" stroke-width="1"/><text x="1222.5" y="481.7" text-anchor="end" font-size="12" fill="#35393f">30 °C</text><line x1="1226" x2="1461" y1="527.5" y2="527.5" stroke="#e3e4e6" stroke-width="1"/><text x="1222.5" y="530.2" text-anchor="end" font-size="12" fill="#35393f">20 °C</text><line x1="1226" x2="1461" y1="575.5" y2="575.5" stroke="#e3e4e6" stroke-width="1"/><text x="1222.5" y="578.7" text-anchor="end" font-size="12" fill="#35393f">10 °C</text><line x1="1226" x2="1461" y1="624.5" y2="624.5" stroke="#e3e4e6" stroke-width="1"/><text x="1222.5" y="627.2" text-anchor="end" font-size="12" fill="#35393f">0 °C</text><line x1="1314.5" x2="1314.5" y1="430" y2="624" stroke="#e3e4e6" stroke-width="1"/><text x="1314" y="642.3" text-anchor="middle" font-size="12" fill="#35393f">15:34</text><line x1="1408.5" x2="1408.5" y1="430" y2="624" stroke="#e3e4e6" stroke-width="1"/><text x="1408" y="642.3" text-anchor="middle" font-size="12" fill="#35393f">15:36</text><polygon points="1419,624 1431,469 1454,469 1454,624" fill="rgba(86,166,75,0.18)"/><polyline points="1226,624 1419,624 1431,469 1454,469" fill="none" stroke="#66a95b" stroke-width="2" stroke-linejoin="round" stroke-linecap="round"/><rect x="1202.5" y="661.0" width="13.5" height="3.8" rx="0.6" fill="#6aaa5f"/><text x="1224" y="665.9" font-size="12" fill="#35393f">training-zs7m1b-worker-0</text><line x1="312" x2="529" y1="734.5" y2="734.5" stroke="#e3e4e6" stroke-width="1"/><text x="308.5" y="737.6" text-anchor="end" font-size="12" fill="#35393f">5.72 MiB</text><line x1="312" x2="529" y1="766.5" y2="766.5" stroke="#e3e4e6" stroke-width="1"/><text x="308.5" y="769.7666666666667" text-anchor="end" font-size="12" fill="#35393f">4.77 MiB</text><line x1="312" x2="529" y1="798.5" y2="798.5" stroke="#e3e4e6" stroke-width="1"/><text x="308.5" y="801.9333333333334" text-anchor="end" font-size="12" fill="#35393f">3.81 MiB</text><line x1="312" x2="529" y1="830.5" y2="830.5" stroke="#e3e4e6" stroke-width="1"/><text x="308.5" y="834.1" text-anchor="end" font-size="12" fill="#35393f">2.86 MiB</text><line x1="312" x2="529" y1="863.5" y2="863.5" stroke="#e3e4e6" stroke-width="1"/><text x="308.5" y="866.2666666666667" text-anchor="end" font-size="12" fill="#35393f">1.91 MiB</text><line x1="312" x2="529" y1="895.5" y2="895.5" stroke="#e3e4e6" stroke-width="1"/><text x="308.5" y="898.4333333333334" text-anchor="end" font-size="12" fill="#35393f">977 KiB</text><line x1="312" x2="529" y1="927.5" y2="927.5" stroke="#e3e4e6" stroke-width="1"/><text x="308.5" y="930.6" text-anchor="end" font-size="12" fill="#35393f">0 B</text><line x1="392.5" x2="392.5" y1="734.4" y2="927.4" stroke="#e3e4e6" stroke-width="1"/><text x="392" y="945.6999999999999" text-anchor="middle" font-size="12" fill="#35393f">15:34</text><line x1="480.5" x2="480.5" y1="734.4" y2="927.4" stroke="#e3e4e6" stroke-width="1"/><text x="480" y="945.6999999999999" text-anchor="middle" font-size="12" fill="#35393f">15:36</text><polygon points="491,927.4 501,769 523,769 523,927.4" fill="rgba(86,166,75,0.18)"/><polyline points="312,927.4 491,927.4 501,769 523,769" fill="none" stroke="#66a95b" stroke-width="2" stroke-linejoin="round" stroke-linecap="round"/><rect x="270.5" y="965.0" width="13.5" height="3.8" rx="0.6" fill="#6aaa5f"/><text x="292" y="969.9" font-size="12" fill="#35393f">training-zs7m1b-worker-0</text><line x1="623" x2="840" y1="734.5" y2="734.5" stroke="#e3e4e6" stroke-width="1"/><text x="619.5" y="737.4000000000001" text-anchor="end" font-size="12" fill="#35393f">38.1 MiB</text><line x1="623" x2="840" y1="782.5" y2="782.5" stroke="#e3e4e6" stroke-width="1"/><text x="619.5" y="785.8000000000001" text-anchor="end" font-size="12" fill="#35393f">28.6 MiB</text><line x1="623" x2="840" y1="831.5" y2="831.5" stroke="#e3e4e6" stroke-width="1"/><text x="619.5" y="834.2" text-anchor="end" font-size="12" fill="#35393f">19.1 MiB</text><line x1="623" x2="840" y1="879.5" y2="879.5" stroke="#e3e4e6" stroke-width="1"/><text x="619.5" y="882.6" text-anchor="end" font-size="12" fill="#35393f">9.54 MiB</text><line x1="623" x2="840" y1="927.5" y2="927.5" stroke="#e3e4e6" stroke-width="1"/><text x="619.5" y="931.0" text-anchor="end" font-size="12" fill="#35393f">0 B</text><line x1="704.5" x2="704.5" y1="734.2" y2="927.8" stroke="#e3e4e6" stroke-width="1"/><text x="704" y="946.0999999999999" text-anchor="middle" font-size="12" fill="#35393f">15:34</text><line x1="790.5" x2="790.5" y1="734.2" y2="927.8" stroke="#e3e4e6" stroke-width="1"/><text x="790" y="946.0999999999999" text-anchor="middle" font-size="12" fill="#35393f">15:36</text><polygon points="801,927.8 812,759 834,759 834,927.8" fill="rgba(86,166,75,0.18)"/><polyline points="623,927.8 801,927.8 812,759 834,759" fill="none" stroke="#66a95b" stroke-width="2" stroke-linejoin="round" stroke-linecap="round"/><rect x="581.5" y="965.0" width="13.5" height="3.8" rx="0.6" fill="#6aaa5f"/><text x="603" y="969.9" font-size="12" fill="#35393f">training-zs7m1b-worker-0</text><line x1="918" x2="1151" y1="734.5" y2="734.5" stroke="#e3e4e6" stroke-width="1"/><text x="914.5" y="737.4000000000001" text-anchor="end" font-size="12" fill="#35393f">1</text><line x1="918" x2="1151" y1="782.5" y2="782.5" stroke="#e3e4e6" stroke-width="1"/><text x="914.5" y="785.8000000000001" text-anchor="end" font-size="12" fill="#35393f">0.500</text><line x1="918" x2="1151" y1="831.5" y2="831.5" stroke="#e3e4e6" stroke-width="1"/><text x="914.5" y="834.2" text-anchor="end" font-size="12" fill="#35393f">0</text><line x1="918" x2="1151" y1="879.5" y2="879.5" stroke="#e3e4e6" stroke-width="1"/><text x="914.5" y="882.6" text-anchor="end" font-size="12" fill="#35393f">-0.50</text><line x1="918" x2="1151" y1="927.5" y2="927.5" stroke="#e3e4e6" stroke-width="1"/><text x="914.5" y="931.0" text-anchor="end" font-size="12" fill="#35393f">-1</text><line x1="1004.5" x2="1004.5" y1="734.2" y2="927.8" stroke="#e3e4e6" stroke-width="1"/><text x="1004.5" y="946.0999999999999" text-anchor="middle" font-size="12" fill="#35393f">15:34</text><line x1="1098.5" x2="1098.5" y1="734.2" y2="927.8" stroke="#e3e4e6" stroke-width="1"/><text x="1098" y="946.0999999999999" text-anchor="middle" font-size="12" fill="#35393f">15:36</text><polyline points="918,831 1144,831" fill="none" stroke="#66a95b" stroke-width="2" stroke-linejoin="round" stroke-linecap="round"/><rect x="892.5" y="965.0" width="13.5" height="3.8" rx="0.6" fill="#6aaa5f"/><text x="914" y="969.9" font-size="12" fill="#35393f">training-zs7m1b-worker-0</text><line x1="1218" x2="1461" y1="734.5" y2="734.5" stroke="#e3e4e6" stroke-width="1"/><text x="1214.5" y="737.4000000000001" text-anchor="end" font-size="12" fill="#35393f">1</text><line x1="1218" x2="1461" y1="782.5" y2="782.5" stroke="#e3e4e6" stroke-width="1"/><text x="1214.5" y="785.8000000000001" text-anchor="end" font-size="12" fill="#35393f">0.5</text><line x1="1218" x2="1461" y1="831.5" y2="831.5" stroke="#e3e4e6" stroke-width="1"/><text x="1214.5" y="834.2" text-anchor="end" font-size="12" fill="#35393f">0</text><line x1="1218" x2="1461" y1="879.5" y2="879.5" stroke="#e3e4e6" stroke-width="1"/><text x="1214.5" y="882.6" text-anchor="end" font-size="12" fill="#35393f">-0.5</text><line x1="1218" x2="1461" y1="927.5" y2="927.5" stroke="#e3e4e6" stroke-width="1"/><text x="1214.5" y="931.0" text-anchor="end" font-size="12" fill="#35393f">-1</text><line x1="1309.5" x2="1309.5" y1="734.2" y2="927.8" stroke="#e3e4e6" stroke-width="1"/><text x="1309" y="946.0999999999999" text-anchor="middle" font-size="12" fill="#35393f">15:34</text><line x1="1405.5" x2="1405.5" y1="734.2" y2="927.8" stroke="#e3e4e6" stroke-width="1"/><text x="1405" y="946.0999999999999" text-anchor="middle" font-size="12" fill="#35393f">15:36</text><polyline points="1218,831 1454,831" fill="none" stroke="#66a95b" stroke-width="2" stroke-linejoin="round" stroke-linecap="round"/><rect x="1202.5" y="965.0" width="13.5" height="3.8" rx="0.6" fill="#6aaa5f"/><text x="1224" y="969.9" font-size="12" fill="#35393f">training-zs7m1b-worker-0</text></svg><div class="abs" style="left:16px;top:870px;width:614px;height:40px;background:#fff;border:1px solid #d9dde4;border-radius:3px"></div><div class="abs" style="left:638px;top:870px;width:613px;height:40px;background:#fff;border:1px solid #d9dde4;border-radius:3px"></div></div><svg class="abs" style="left:0;top:0;z-index:10" width="1519" height="1000" viewBox="0 0 1519 1000"><rect x="443.5" y="66.5" width="89" height="54.6" rx="5.5" fill="none" stroke="#fc4a40" stroke-width="3"/><path d="M637 30.4 L566.4 69.6 L563.6 61 L550.4 87.8 L580.4 87.8 L574 81.6 L642.4 34 A3 3 0 0 0 637 30.4 Z" fill="#fd4f45"/></svg></body></html>
